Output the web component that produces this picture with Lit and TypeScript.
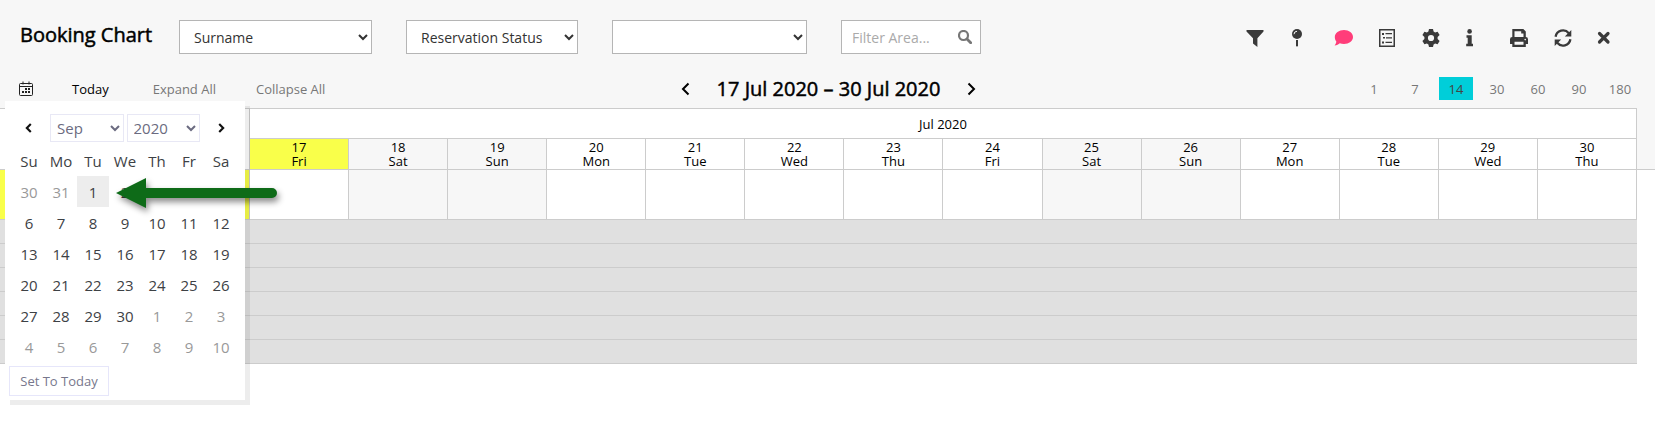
import { LitElement, html, css, svg } from "lit";
import { customElement, state } from "lit/decorators.js";
import { classMap } from "lit/directives/class-map.js";

const tools = [
  { label: "Filter", art: svg`<path d="M0.5 1h17v1.6L11.4 9.2V18L7 14.6V9.2L0.5 2.6z"/>` },
  { label: "Pins", art: svg`<circle cx="7" cy="5" r="5"/><path d="M6 11h2v5.5L7 18l-1-1.500z"/><path d="M4 5.200A3 3 0 0 1 7 2.300" fill="none" stroke="#f7f7f7"/>` },
  { label: "Comments", pink: true, art: svg`<path d="M10 1c5 0 9 3 9 7s-4 7-9 7c-1.600 0-3-.3-4.200-.8C4.600 15.300 2.800 16.500.6 16.500c1-1.200 1.700-2.600 1.700-4C1.300 11.300.8 9.700.8 8 .8 4 5 1 10 1z"/>` },
  { label: "List", art: svg`<path fill-rule="evenodd" d="M1 0h16v18H1zM2.500 1.500v15h13v-15z"/><path d="M4 4h2v2H4zM5 8h2v1.500H5zM4 12.500h2v2H4zM7.500 4H14v1.300H7.500zM8 8.300h6v1.300H8zM7.500 12.700H14V14H7.500z"/>` },
  { label: "Settings", art: svg`<g transform="translate(9 9)"><path fill-rule="evenodd" d="M-2-9h4l.6 2.600 1.500.9 2.500-.8 2 3.400-2 1.900v2l2 1.900-2 3.400-2.500-.8-1.500.9L2 9h-4l-.6-2.600-1.500-.9-2.500.8-2-3.400 2-1.900v-2l-2-1.900 2-3.400 2.500.8 1.500-.9zM0-3.100a3.100 3.100 0 1 0 0 6.200 3.100 3.100 0 0 0 0-6.200z"/></g>` },
  { label: "Information", art: svg`<circle cx="3.600" cy="2.400" r="2.300"/><path d="M.5 6.300h5.200v8.400H7V17.200H.2v-2.500h1.500V8.800H.5z"/>` },
  { label: "Print", art: svg`<path fill-rule="evenodd" d="M2.300 0h11l2.500 2.500V8A2.300 2.300 0 0 1 18 10.300V15h-2.200v3H2.300v-3H0v-4.700A2.300 2.300 0 0 1 2.300 8zM4.500 2.200V8h9V4.500h-2.300V2.200zM4.500 12.800v3h9v-3z"/><circle cx="15.200" cy="10.600" r=".8" fill="#f7f7f7"/>` },
  { label: "Refresh", art: svg`<path d="M1.600 7.800A7.500 7.500 0 0 1 14.800 4.200M16.400 10.200A7.500 7.500 0 0 1 3.200 13.800" fill="none" stroke="currentColor" stroke-width="2.300"/><path d="M17.300 1v6.500h-6.500zM.7 17v-6.500h6.500z"/>` },
  { label: "Close", art: svg`<path d="M1.500 4.500l8.500 8.500M10 4.500l-8.500 8.500" fill="none" stroke="currentColor" stroke-width="3.200" stroke-linecap="round"/>` },
];

const chevron = (d: string, size: number) =>
  html`<svg class="chevron" width=${size} height=${size} viewBox="0 0 14 14" aria-hidden="true"><path d=${d} /></svg>`;
const LEFT = "M9.500 1.500L4 7l5.500 5.500";
const RIGHT = "M4.500 1.500L10 7l-5.500 5.500";

@customElement("date-picker")
export class DatePicker extends LitElement {
  @state() private selected = 2;

  static styles = css`
    :host {
      display: block;
      box-sizing: border-box;
      width: 240px;
      padding: 13px 8px 4px;
      background: #fff;
      box-shadow: 5px 5px 0 rgba(0, 0, 0, 0.07);
      color: #3d4145;
      font-size: 15px;
    }
    .nav { display: grid; grid-template-columns: 32px 1fr 32px; align-items: center; }
    .selects { display: grid; grid-template-columns: 1fr 1fr; gap: 3px; margin: 0 5px; }
    select {
      height: 28px;
      padding: 0 2px;
      border: 1px solid #e8e8f5;
      border-radius: 0;
      background: #fff;
      color: #6b6b80;
      font: inherit;
    }
    button { border: 0; padding: 0; background: none; color: inherit; font: inherit; }
    .step { display: grid; place-items: center; height: 28px; color: #111; }
    .chevron { fill: none; stroke: currentColor; stroke-width: 3; }
    table { width: 100%; margin-top: 4px; border-collapse: collapse; table-layout: fixed; }
    th { height: 30px; padding: 0; font-weight: 400; }
    td { height: 31px; padding: 0; }
    .day { display: block; width: 100%; height: 31px; text-align: center; }
    .outside { color: #999; }
    .selected { background: #ededed; }
    .today {
      display: block;
      height: 30px;
      width: 100px;
      margin: 4px 0 0 -4px;
      border: 1px solid #e6e6fa;
      color: #77778c;
      font-size: 13px;
    }
  `;

  render() {
    const weeks = Array.from({ length: 6 }, (_, w) => Array.from({ length: 7 }, (_, d) => w * 7 + d));
    return html`
      <div class="nav">
        <button class="step" aria-label="Previous month">${chevron(LEFT, 10)}</button>
        <div class="selects">
          <select aria-label="Month"><option>Sep</option></select>
          <select aria-label="Year"><option>2020</option></select>
        </div>
        <button class="step" aria-label="Next month">${chevron(RIGHT, 10)}</button>
      </div>
      <table>
        <thead><tr>${["Su", "Mo", "Tu", "We", "Th", "Fr", "Sa"].map((d) => html`<th scope="col">${d}</th>`)}</tr></thead>
        <tbody>
          ${weeks.map((week) => html`<tr>${week.map((i) => {
            const date = new Date(2020, 7, 30 + i);
            return html`<td><button
              class=${classMap({ day: true, outside: date.getMonth() !== 8, selected: i === this.selected })}
              @click=${() => (this.selected = i)}>${date.getDate()}</button></td>`;
          })}</tr>`)}
        </tbody>
      </table>
      <button class="today">Set To Today</button>
    `;
  }
}

@customElement("booking-grid")
export class BookingGrid extends LitElement {
  static styles = css`
    :host { display: block; font-size: 13px; line-height: 14px; color: #000; }
    table { width: 100%; border-collapse: separate; border-spacing: 0; table-layout: fixed; }
    .side { width: 250px; }
    .gutter { width: 18px; }
    th, td { box-sizing: border-box; padding: 0; border: 0 solid #ccc; font-weight: 400; }
    th, .slot, .now { border-width: 0 1px 1px 0; background: #fff; }
    .month th { height: 31px; border-top-width: 1px; }
    .dates th { height: 31px; }
    .rooms td { height: 50px; }
    .empty td { height: 24px; border-bottom-width: 1px; background: #e0e0e0; }
    th.weekend, .slot.weekend { background: #f7f7f7; }
    th.current, .now { background: #f9ff4a; }
    .month .filler { border-width: 0 0 1px; background: #f7f7f7; }
    .empty .blank { border: 0; background: none; }
    .num, .name { display: block; }
  `;

  render() {
    const days = Array.from({ length: 14 }, (_, i) => new Date(2020, 6, 17 + i));
    const weekend = (d: Date) => d.getDay() % 6 === 0;
    return html`
      <table>
        <colgroup><col class="side" />${days.map(() => html`<col />`)}<col class="gutter" /></colgroup>
        <thead>
          <tr class="month">
            <th rowspan="2"></th>
            <th colspan="14" scope="colgroup">Jul 2020</th>
            <td class="filler" rowspan="2"></td>
          </tr>
          <tr class="dates">
            ${days.map((d, i) => html`<th scope="col" class=${classMap({ weekend: weekend(d), current: i === 0 })}>
              <span class="num">${d.getDate()}</span>
              <span class="name">${["Sun", "Mon", "Tue", "Wed", "Thu", "Fri", "Sat"][d.getDay()]}</span>
            </th>`)}
          </tr>
        </thead>
        <tbody>
          <tr class="rooms">
            <td class="now"></td>
            ${days.map((d) => html`<td class=${classMap({ slot: true, weekend: weekend(d) })}></td>`)}
            <td></td>
          </tr>
          ${[1, 2, 3, 4, 5, 6].map(() => html`<tr class="empty"><td colspan="15"></td><td class="blank"></td></tr>`)}
        </tbody>
      </table>
    `;
  }
}

@customElement("app-root")
export class AppRoot extends LitElement {
  @state() private range = 14;

  static styles = css`
    :host {
      display: block;
      min-height: 100vh;
      background: #fff;
      font-family: "Open Sans", "Noto Sans", sans-serif;
      font-size: 13px;
      color: #000;
    }
    header { background: #f7f7f7; padding: 20px 0 8px; }
    button { border: 0; padding: 0; background: none; color: inherit; font: inherit; }
    .top { display: flex; align-items: center; padding: 0 39px 0 20px; }
    h1, h2 { margin: 0; font-size: 20px; font-weight: 400; -webkit-text-stroke: 0.5px currentColor; white-space: nowrap; }
    h1 { align-self: flex-start; width: 159px; line-height: 30px; }
    h2 { line-height: 23px; }
    .filters { display: flex; gap: 34px; }
    .field {
      box-sizing: border-box;
      height: 34px;
      border: 1px solid #b5b5b5;
      border-radius: 0;
      background: #fff;
      color: #333;
      font: inherit;
      font-size: 14px;
    }
    select.field { padding: 0 0 0 10px; }
    .surname { width: 193px; }
    .status { width: 172px; }
    .other { width: 195px; }
    .search { display: flex; align-items: center; width: 140px; padding: 0 8px 0 10px; }
    .search input { flex: 1; min-width: 0; padding: 0; border: 0; outline: 0; background: none; font: inherit; }
    .search input::placeholder { color: #aaa; }
    .tools { display: flex; gap: 26px; margin-left: auto; padding-top: 2px; color: #3a3a3a; }
    .tools button { display: grid; width: 18px; height: 18px; }
    .tools svg { fill: currentColor; overflow: visible; }
    .tools .pink { color: #ff3d7a; }
    .bar {
      position: relative;
      display: grid;
      grid-template-columns: 1fr auto 1fr;
      align-items: center;
      height: 23px;
      margin-top: 23px;
      padding: 0 18px 0 20px;
    }
    .links { display: flex; align-items: center; gap: 40px; color: #777; }
    .links .on { margin-right: 4px; color: #000; }
    .links .cal { display: grid; color: #222; }
    .period { display: flex; align-items: center; gap: 24px; }
    .period button { display: grid; }
    .chevron { fill: none; stroke: currentColor; stroke-width: 2; }
    .ranges { display: flex; gap: 7px; justify-content: flex-end; color: #777; }
    .ranges button { width: 34px; height: 23px; }
    .ranges .active { background: #00ced9; color: #444; }
    date-picker { position: absolute; z-index: 1; left: 5px; top: 24px; }
    .pointer { position: absolute; z-index: 2; left: 110px; top: 96px; filter: drop-shadow(2px 4px 3px rgba(0, 0, 0, 0.45)); }
  `;

  render() {
    return html`
      <header>
        <div class="top">
          <h1>Booking Chart</h1>
          <div class="filters">
            <select class="field surname" aria-label="Guest field"><option>Surname</option></select>
            <select class="field status" aria-label="Reservation status"><option>Reservation Status</option></select>
            <select class="field other" aria-label="Category"><option></option></select>
            <label class="field search">
              <input type="text" placeholder="Filter Area..." aria-label="Filter area" />
              <svg width="14" height="14" viewBox="0 0 14 14" fill="none" stroke="#777" aria-hidden="true">
                <circle cx="5.500" cy="5.500" r="4.500" stroke-width="2.200" />
                <path d="M9 9l3.700 3.700" stroke-width="2.800" stroke-linecap="round" />
              </svg>
            </label>
          </div>
          <div class="tools">
            ${tools.map((t) => html`<button aria-label=${t.label} class=${classMap({ pink: !!t.pink })}>
              <svg width="18" height="18" viewBox="0 0 18 18" aria-hidden="true">${t.art}</svg>
            </button>`)}
          </div>
        </div>
        <div class="bar">
          <div class="links">
            <button class="cal" aria-label="Choose date">
              <svg width="12" height="15" viewBox="1 0 12 15" overflow="visible" aria-hidden="true">
                <path d="M1.500 2.500h11a1 1 0 0 1 1 1v10a1 1 0 0 1-1 1h-11a1 1 0 0 1-1-1v-10a1 1 0 0 1 1-1zM.5 5.500h13M4 0.500v3M10 0.500v3" fill="none" stroke="currentColor" />
                <path d="M6 7h2v2H6zM9 7h2v2H9zM3 10h2v2H3zM6 10h2v2H6zM9 10h2v2H9z" fill="currentColor" />
              </svg>
            </button>
            <button class="on">Today</button>
            <button>Expand All</button>
            <button>Collapse All</button>
          </div>
          <div class="period">
            <button aria-label="Previous period">${chevron(LEFT, 14)}</button>
            <h2>17 Jul 2020 – 30 Jul 2020</h2>
            <button aria-label="Next period">${chevron(RIGHT, 14)}</button>
          </div>
          <div class="ranges">
            ${[1, 7, 14, 30, 60, 90, 180].map((n) => html`<button
              class=${classMap({ active: n === this.range })}
              @click=${() => (this.range = n)}>${n}</button>`)}
          </div>
          <date-picker></date-picker>
          <svg class="pointer" width="172" height="40" viewBox="0 0 172 40" aria-hidden="true">
            <path d="M6 20L36 5v10h126a5 5 0 0 1 0 10H36v10z" fill="#0e6b18" />
          </svg>
        </div>
      </header>
      <booking-grid></booking-grid>
    `;
  }
}
